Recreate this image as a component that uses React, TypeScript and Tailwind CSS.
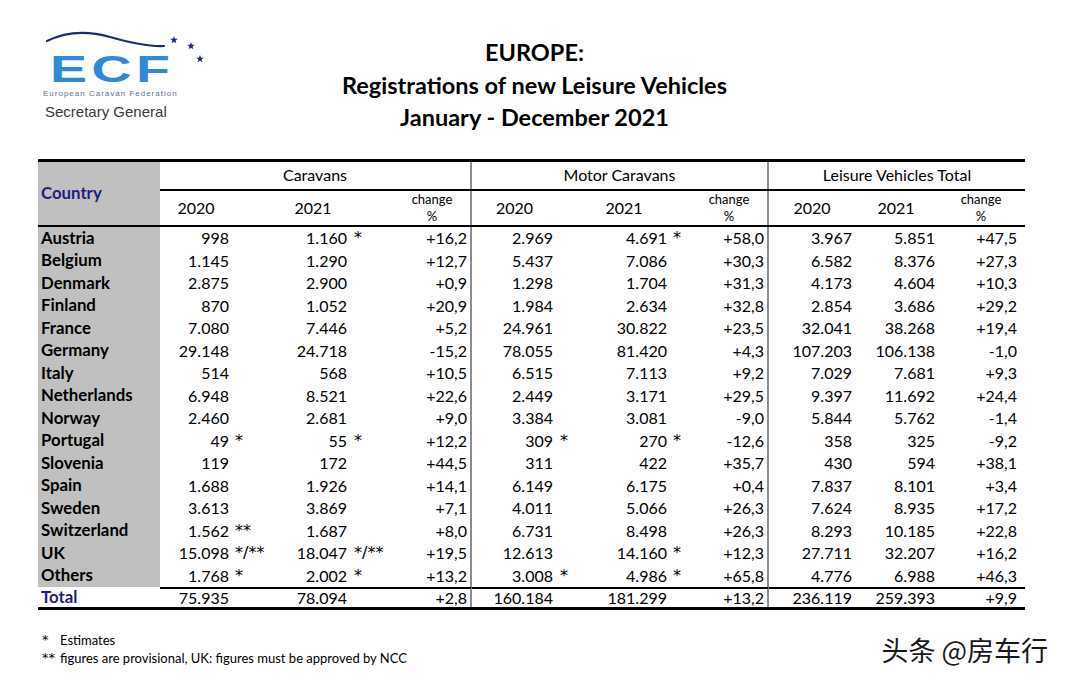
import React from 'react';

type Row = {
  country: string;
  car: [string, string, string, string, string];
  motor: [string, string, string, string, string];
  total: [string, string, string];
};

const rows: Row[] = [
  { country: 'Austria', car: ['998', '', '1.160', '*', '+16,2'], motor: ['2.969', '', '4.691', '*', '+58,0'], total: ['3.967', '5.851', '+47,5'] },
  { country: 'Belgium', car: ['1.145', '', '1.290', '', '+12,7'], motor: ['5.437', '', '7.086', '', '+30,3'], total: ['6.582', '8.376', '+27,3'] },
  { country: 'Denmark', car: ['2.875', '', '2.900', '', '+0,9'], motor: ['1.298', '', '1.704', '', '+31,3'], total: ['4.173', '4.604', '+10,3'] },
  { country: 'Finland', car: ['870', '', '1.052', '', '+20,9'], motor: ['1.984', '', '2.634', '', '+32,8'], total: ['2.854', '3.686', '+29,2'] },
  { country: 'France', car: ['7.080', '', '7.446', '', '+5,2'], motor: ['24.961', '', '30.822', '', '+23,5'], total: ['32.041', '38.268', '+19,4'] },
  { country: 'Germany', car: ['29.148', '', '24.718', '', '-15,2'], motor: ['78.055', '', '81.420', '', '+4,3'], total: ['107.203', '106.138', '-1,0'] },
  { country: 'Italy', car: ['514', '', '568', '', '+10,5'], motor: ['6.515', '', '7.113', '', '+9,2'], total: ['7.029', '7.681', '+9,3'] },
  { country: 'Netherlands', car: ['6.948', '', '8.521', '', '+22,6'], motor: ['2.449', '', '3.171', '', '+29,5'], total: ['9.397', '11.692', '+24,4'] },
  { country: 'Norway', car: ['2.460', '', '2.681', '', '+9,0'], motor: ['3.384', '', '3.081', '', '-9,0'], total: ['5.844', '5.762', '-1,4'] },
  { country: 'Portugal', car: ['49', '*', '55', '*', '+12,2'], motor: ['309', '*', '270', '*', '-12,6'], total: ['358', '325', '-9,2'] },
  { country: 'Slovenia', car: ['119', '', '172', '', '+44,5'], motor: ['311', '', '422', '', '+35,7'], total: ['430', '594', '+38,1'] },
  { country: 'Spain', car: ['1.688', '', '1.926', '', '+14,1'], motor: ['6.149', '', '6.175', '', '+0,4'], total: ['7.837', '8.101', '+3,4'] },
  { country: 'Sweden', car: ['3.613', '', '3.869', '', '+7,1'], motor: ['4.011', '', '5.066', '', '+26,3'], total: ['7.624', '8.935', '+17,2'] },
  { country: 'Switzerland', car: ['1.562', '**', '1.687', '', '+8,0'], motor: ['6.731', '', '8.498', '', '+26,3'], total: ['8.293', '10.185', '+22,8'] },
  { country: 'UK', car: ['15.098', '*/**', '18.047', '*/**', '+19,5'], motor: ['12.613', '', '14.160', '*', '+12,3'], total: ['27.711', '32.207', '+16,2'] },
  { country: 'Others', car: ['1.768', '*', '2.002', '*', '+13,2'], motor: ['3.008', '*', '4.986', '*', '+65,8'], total: ['4.776', '6.988', '+46,3'] },
];

const totalRow: Row = {
  country: 'Total',
  car: ['75.935', '', '78.094', '', '+2,8'],
  motor: ['160.184', '', '181.299', '', '+13,2'],
  total: ['236.119', '259.393', '+9,9'],
};

const cols =
  'grid grid-cols-[122px_71px_44px_73px_42px_82px_82px_36px_79px_31px_69px_84px_83px_89px]';
const sep = 'border-r-2 border-[#8c8c8c]';

function Stars() {
  const star = (cx: number, cy: number, r: number) => {
    const pts: string[] = [];
    for (let i = 0; i < 10; i++) {
      const a = (Math.PI / 5) * i - Math.PI / 2;
      const rr = i % 2 === 0 ? r : r * 0.42;
      pts.push(`${(cx + rr * Math.cos(a)).toFixed(2)},${(cy + rr * Math.sin(a)).toFixed(2)}`);
    }
    return <polygon key={`${cx}-${cy}`} points={pts.join(' ')} fill="#1b2f6e" />;
  };
  return (
    <svg className="absolute left-0 top-0" width="180" height="70" viewBox="0 0 180 70">
      <path d="M9,41 Q37,27 72,37 T126,46" fill="none" stroke="#1b2f6e" strokeWidth="2.2" strokeLinecap="round" />
      {star(136, 40, 4)}
      {star(153, 46, 4)}
      {star(162, 59, 4)}
    </svg>
  );
}

function Logo() {
  return (
    <div className="relative w-[180px] h-[159px] shrink-0">
      <Stars />
      <div className="pt-[51px] pl-[12px]">
        <div className="origin-left scale-x-[1.5] text-[37px] leading-none font-bold tracking-[3px] text-[#2e8ad8] font-['Liberation_Sans',Arial,sans-serif]">
          ECF
        </div>
      </div>
      <div className="mt-[1px] pl-[5px] text-[8px] leading-[10px] tracking-[1px] text-[#5a6f8f] font-['Liberation_Sans',Arial,sans-serif] whitespace-nowrap">
        European Caravan Federation
      </div>
      <div className="mt-[4px] pl-[7px] text-[15px] leading-[18px] text-[#3a3a3a] font-['Liberation_Sans',Arial,sans-serif] whitespace-nowrap">
        Secretary General
      </div>
    </div>
  );
}

function Num({ v, pr, className = '' }: { v: string; pr: string; className?: string }) {
  return <div className={`flex items-center justify-end ${pr} ${className}`}>{v}</div>;
}

function Mark({ v, pl }: { v: string; pl: string }) {
  return (
    <div className={`flex items-center whitespace-nowrap text-[16px] font-['DejaVu_Sans',sans-serif] ${pl}`}>
      {v}
    </div>
  );
}

function DataRow({ r, total }: { r: Row; total?: boolean }) {
  const top = total ? 'border-t-2 border-t-black' : '';
  return (
    <div className={`${cols} ${total ? 'h-[20px]' : 'h-[22.5px]'} text-[16px] leading-none`}>
      <div className={`flex items-center pl-[3px] font-bold text-[16.8px] ${total ? 'bg-white text-[#1e1e80]' : 'bg-[#c0c0c0]'}`}>
        {r.country}
      </div>
      <Num v={r.car[0]} pr="pr-[2px]" className={top} />
      <div className={`flex ${top}`}><Mark v={r.car[1]} pl="pl-[4px]" /></div>
      <Num v={r.car[2]} pr="pr-[1px]" className={top} />
      <div className={`flex ${top}`}><Mark v={r.car[3]} pl="pl-[6px]" /></div>
      <Num v={r.car[4]} pr="pr-[3px]" className={`${sep} ${top}`} />
      <Num v={r.motor[0]} pr="pr-[1px]" className={top} />
      <div className={`flex ${top}`}><Mark v={r.motor[1]} pl="pl-[6px]" /></div>
      <Num v={r.motor[2]} pr="pr-[2px]" className={top} />
      <div className={`flex ${top}`}><Mark v={r.motor[3]} pl="pl-[4px]" /></div>
      <Num v={r.motor[4]} pr="pr-[3px]" className={`${sep} ${top}`} />
      <Num v={r.total[0]} pr="pr-[1px]" className={top} />
      <Num v={r.total[1]} pr="pr-[1px]" className={top} />
      <Num v={r.total[2]} pr="pr-[8px]" className={top} />
    </div>
  );
}

function Change() {
  return (
    <div className="flex flex-col items-center text-[13px] leading-[17px]">
      <span>change</span>
      <span>%</span>
    </div>
  );
}

function Header() {
  return (
    <div className="flex border-t-[3px] border-b-2 border-black">
      <div className="w-[122px] h-[63px] bg-[#c0c0c0] flex items-center pl-[3px] pb-[2px] font-bold text-[16.8px] text-[#1e1e80]">
        Country
      </div>
      <div className="flex flex-col">
        <div className="grid grid-cols-[312px_297px_256px] h-[29px] border-b-2 border-black text-[16px]">
          <div className={`flex items-center justify-center pb-[2px] ${sep}`}>Caravans</div>
          <div className={`flex items-center justify-center pb-[2px] ${sep}`}>Motor Caravans</div>
          <div className="flex items-center justify-center pb-[2px]">Leisure Vehicles Total</div>
        </div>
        <div className="grid grid-cols-[72px_162px_78px_85px_134px_78px_86px_82px_88px] h-[34px] text-[16px]">
          <div className="flex items-center justify-center">2020</div>
          <div className="flex items-center justify-center">2021</div>
          <div className={`flex items-center justify-center ${sep}`}><Change /></div>
          <div className="flex items-center justify-center">2020</div>
          <div className="flex items-center justify-center">2021</div>
          <div className={`flex items-center justify-center ${sep}`}><Change /></div>
          <div className="flex items-center justify-center">2020</div>
          <div className="flex items-center justify-center">2021</div>
          <div className="flex items-center justify-center"><Change /></div>
        </div>
      </div>
    </div>
  );
}

export default function App() {
  return (
    <div className="w-[1069px] h-[683px] overflow-hidden bg-white text-black font-['Lato','Open_Sans',sans-serif]">
      <div className="flex h-[159px] px-[38px]">
        <Logo />
        <div className="flex-1 pt-[36px] text-center text-[23.5px] leading-[32.5px] font-bold whitespace-nowrap">
          <div>EUROPE:</div>
          <div>Registrations of new Leisure Vehicles</div>
          <div>January - December 2021</div>
        </div>
        <div className="w-[180px] shrink-0" />
      </div>

      <div className="ml-[38px] w-[987px] border-b-[3px] border-black">
        <Header />
        {rows.map(r => (
          <DataRow key={r.country} r={r} />
        ))}
        <DataRow r={totalRow} total />
      </div>

      <div className="flex items-center justify-between pl-[42px] pr-[21px] mt-[21px]">
        <div className="text-[13px] leading-[18px]">
          <div className="flex">
            <span className="w-[18px] font-['DejaVu_Sans',sans-serif]">*</span>
            <span>Estimates</span>
          </div>
          <div className="flex">
            <span className="w-[18px] font-['DejaVu_Sans',sans-serif]">**</span>
            <span>figures are provisional, UK: figures must be approved by NCC</span>
          </div>
        </div>
        <div className="text-[27px] leading-none text-[#1a1a1a] font-['Noto_Sans_CJK_SC','Noto_Sans',sans-serif]">
          头条 @房车行
        </div>
      </div>
    </div>
  );
}
